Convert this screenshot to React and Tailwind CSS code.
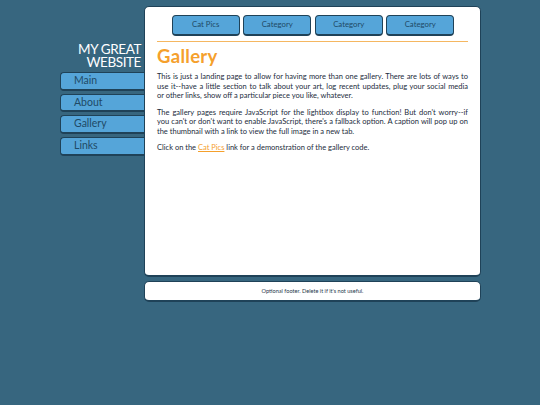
const font = { fontFamily: 'Lato, sans-serif' };

function NavItem({ label }) {
  return (
    <a className="flex items-center h-[18.5px] pl-[13px] rounded-l-[4px] bg-[#55a5d9] border border-r-0 border-[#1f4258] border-b-2 text-[#1f4a66] text-[10.5px]">
      {label}
    </a>
  );
}

function TopLink({ label }) {
  return (
    <a className="w-[68px] h-[21px] flex items-center justify-center rounded-[4px] bg-[#55a5d9] border border-[#1f4258] border-b-2 text-[#1f4a66] text-[7.8px]">
      {label}
    </a>
  );
}

export default function App() {
  return (
    <div className="min-h-[405px] bg-[#37667f]" style={font}>
      <div className="flex w-[421px] ml-[60px] pt-[6px]">
        <aside className="w-[84px] pt-[37px]">
          <h1 className="pr-[3px] text-right text-white text-[13.5px] tracking-[-0.4px] leading-[13px] font-normal mb-[3px]">
            MY GREAT
            <br />
            WEBSITE
          </h1>
          <nav className="flex flex-col gap-[3.2px]">
            <NavItem label="Main" />
            <NavItem label="About" />
            <NavItem label="Gallery" />
            <NavItem label="Links" />
          </nav>
        </aside>
        <div className="w-[337px]">
          <main className="h-[271px] bg-white rounded-[5px] border border-[#1f4258] border-b-2 px-[12px] pt-[8px]">
            <div className="flex justify-center gap-[3.5px] pl-[1px] pb-[5px] border-b border-[#f5b761]">
              <TopLink label="Cat Pics" />
              <TopLink label="Category" />
              <TopLink label="Category" />
              <TopLink label="Category" />
            </div>
            <h2 className="text-[#f5a02c] text-[18.5px] leading-[24px] font-bold mt-[2px] mb-[4px] tracking-[0.3px]">Gallery</h2>
            <div className="text-[#1c2c3c] text-[7.5px] leading-[9.5px] text-justify">
              <p>
                This is just a landing page to allow for having more than one gallery. There are lots of ways to use it--have a little section to talk about your art, log recent updates, plug your social media or&nbsp;other links, show off a particular piece you like, whatever.
              </p>
              <p className="mt-[7px]">
                The gallery pages require JavaScript for the lightbox display to function! But don't worry--if you can't or don't want to enable JavaScript, there's a fallback option. A caption will pop up on the thumbnail with a link to view the full image in a new tab.
              </p>
              <p className="mt-[7px]">
                Click on the <a className="text-[#f5a02c] underline">Cat Pics</a> link for a demonstration of the gallery code.
              </p>
            </div>
          </main>
          <footer className="h-[21px] mt-[4px] bg-white rounded-[5px] border border-[#1f4258] border-b-2 flex items-center justify-center text-[#26384a] text-[5.6px]">
            Optional footer. Delete it if it's not useful.
          </footer>
        </div>
      </div>
    </div>
  );
}
